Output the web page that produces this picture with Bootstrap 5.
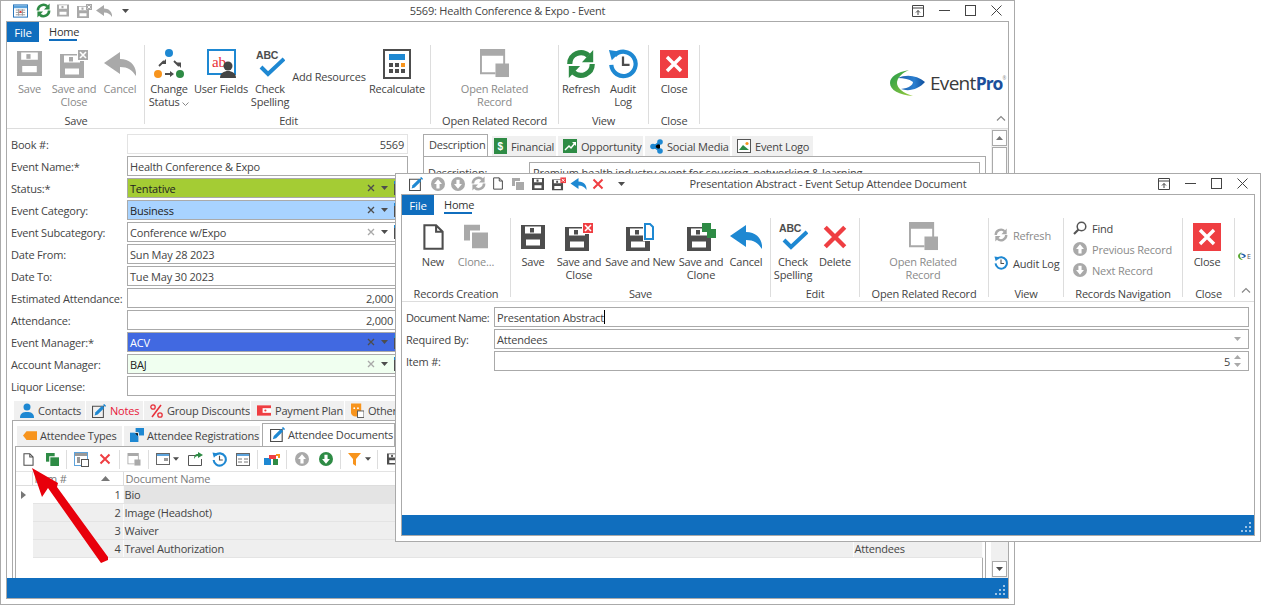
<!DOCTYPE html>
<html lang="en">
<head>
<meta charset="utf-8">
<title>EventPro</title>
<link href="https://cdn.jsdelivr.net/npm/bootstrap@5.3.0/dist/css/bootstrap.min.css" rel="stylesheet">
<style>
html,body{margin:0;height:100%;background:#fff;overflow:hidden}
body{font-family:"Open Sans","Liberation Sans",sans-serif;font-size:11px;line-height:13px;color:#444;letter-spacing:-.2px}
.desk{position:relative;width:1261px;height:605px}
.win{position:absolute;background:#fff;border:1px solid #aaa;display:flex;flex-direction:column}
.win-a{left:0;top:0;width:1015px;height:605px}
.win-b{left:395px;top:173px;width:866px;height:369px}
.ttl{height:19px;flex:none;display:flex;align-items:center;position:relative;padding-left:5px;padding-right:5px}
.ttl-text{position:absolute;left:0;right:0;top:3px;text-align:center;font-size:11px;color:#444}
.qat{display:flex;align-items:center;position:relative;z-index:1}
.ml4{margin-left:4px}.ml5{margin-left:5px}.ml6{margin-left:6px}.ml7{margin-left:7px}.ml8{margin-left:8px}.ml9{margin-left:9px}.ml10{margin-left:10px}.ml14{margin-left:14px}
.winbtns{margin-left:auto;display:flex;position:relative;z-index:1}
.winbtn{width:26px;height:19px;display:flex;align-items:center;justify-content:center;color:#444}
.frame{flex:1;margin:1px 5px 5px;border:1px solid #aaa;display:flex;flex-direction:column;min-height:0;position:relative;overflow:hidden}
.rtabs{height:20px;flex:none;display:flex}
.rfile{width:32px;background:#106ebe;color:#fff;display:flex;align-items:center;justify-content:center;font-size:11.5px}
.rhome{margin-left:10px;width:28px;text-align:center;padding-top:3px;border-bottom:2px solid #106ebe;line-height:13px;color:#333;height:14px;box-sizing:content-box;white-space:nowrap}
.ribbon{height:87px;flex:none;border-bottom:1px solid #ddd;display:flex;position:relative}
.rgrp{margin:3px 0 4px;height:79px;border-right:1px solid #ddd;display:flex;flex-direction:column;flex:none}
.rgrp-top{height:69px;display:flex;flex:none}
.rgrp-lbl{height:13px;margin-bottom:-3px;text-align:center;white-space:nowrap;flex:none;color:#444}
.rbtn{display:flex;flex-direction:column;align-items:center;padding:0;border:0;border-radius:0;font-size:11px;line-height:13px;letter-spacing:inherit;color:#444;flex:none;white-space:nowrap}
.rbtn.off,.sbtn.off{color:#8a8a8a;opacity:1}
.ric{height:37px;display:flex;align-items:center;justify-content:center;flex:none}
.rtop0{padding-top:25px}
.sbtn{display:flex;align-items:center;gap:5px;padding:0;border:0;border-radius:0;font-size:11px;line-height:13px;letter-spacing:inherit;color:#444;white-space:nowrap}
.w38{width:38px}.w40{width:40px}.w42{width:42px}.w43{width:43px}.w44{width:44px}.w46{width:46px}.w48{width:48px}.w50{width:50px}.w56{width:56px}.w60{width:60px}.w74{width:74px}.w80{width:80px}.w126{width:126px}.w127{width:127px}
.g1a{width:138px;padding-left:1px}
.g2a{width:286px;padding-left:2px}
.g3a{width:128px}.g4a{width:90px}.g5a{width:51px}
.g1b{width:109px;padding-left:10px}.g1b .rgrp-lbl{margin-left:-10px}
.g2b{width:260px}.g3b{width:89px}.g4b{width:129px}.g5b{width:75px}.g6b{width:119px}.g7b{width:52px}
.viewcol{padding:10px 0 0 5px;gap:14px;display:flex;flex-direction:column;align-items:flex-start;height:69px}
.navcol{padding:3px 0 0 9px;gap:7px;display:flex;flex-direction:column;align-items:flex-start;height:69px}
.logo-a{margin-left:auto;margin-right:3px;align-self:flex-start;margin-top:27px;overflow:visible}
.logo-b{margin-left:3px;margin-top:37px;align-self:flex-start}
.chev{position:absolute;color:#888;line-height:0}
.win-a .chev{right:2px;top:73px}
.win-b .chev{right:3px;top:72px}
.abody{flex:1;min-height:0;display:flex}
.amain{flex:1;min-width:0;display:flex;flex-direction:column}
.ascroll{width:17px;flex:none;display:flex;flex-direction:column;background:#f0f0f0;padding:1px}
.sb{height:16px;border:1px solid #aaa;display:flex;align-items:center;justify-content:center;background:#fff;flex:none}
.sbthumb{height:200px;border:1px solid #aaa;background:#fff;margin-top:1px;margin-bottom:auto}
.aupper{height:272px;flex:none;display:flex}
.aform{width:415px;flex:none;padding:5px 0 0 4px;display:flex;flex-direction:column;gap:2px}
.frow{display:flex;align-items:center;height:20px}
.flbl{width:116px;flex:none;white-space:nowrap;color:#444}
.fld{border:1px solid #aaa;border-radius:0;height:20px;min-height:0;padding:0 3px 0 2px;font-size:11px;line-height:13px;color:#444;display:flex;align-items:center;background:#fff;white-space:nowrap}
.aform .fld{width:281px;flex:none}
.fld.soft{border-color:#e3e3e3}
.f-tent{background:#a4cc34;color:#222}
.f-bus{background:#a8d3ff;color:#222}
.f-acv{background:#4169e1;color:#fff}
.f-baj{background:#f0fff0;color:#222}
.ficons{margin-left:auto;display:flex;align-items:center;gap:6px}
.num{justify-content:flex-end}
.numpad{padding-right:14px}
.apane{flex:1;min-width:0;padding:5px 5px 0 1px}
.t1.nav-tabs,.t3.nav-tabs{border:0;flex-wrap:nowrap;gap:2px}
.t2.nav-tabs{border:0;flex-wrap:nowrap;gap:1px}
.t1 .nav-link,.t2 .nav-link,.t3 .nav-link{display:flex;align-items:center;gap:4px;padding:0 0 0 6px;margin:0;background:#f0f0f0;border:0;border-radius:0;color:#444;font-size:11px;white-space:nowrap;line-height:13px}
.t1{height:22px;align-items:flex-end}
.t1 .nav-link{height:20px;padding-left:5px;gap:4px}
.t1 .nav-link.active{height:22px;background:#fff;border:1px solid #aaa;border-bottom:0;padding:0 0 2px 5px;color:#444}
.tw65{width:65px}.tw64{width:64px}.tw85{width:85px}.tw81{width:81px}.tw71{width:71px}.tw57{width:57px}.tw105{width:105px}.tw106{width:106px}.tw93{width:93px}.tw60{width:60px}.tw136{width:136px}.tw133{width:133px}
.t1 .fin{margin-left:2px}
.t1 .fin .nav-link{padding-left:2px}
.paneb{height:40px;border:1px solid #aaa;padding:5px 5px 5px 4px;display:flex}
.plbl{width:101px;flex:none;padding-top:4px}
.pval{flex:1;border:1px solid #aaa;padding:3px 3px 0;height:30px;white-space:nowrap;overflow:hidden}
.alower{flex:1;min-height:0;padding:0 0 0 5px;display:flex;flex-direction:column}
.t2{padding-left:2px;height:19px}
.t2 .nav-link{height:19px}
.t2 .nav-link.nr{color:#e8173a}
.lowbox{flex:1;min-height:0;border:1px solid #aaa;border-bottom:0;padding:2px 0 0 2px;margin-right:5px;display:flex;flex-direction:column}
.t3{padding-left:2px;height:23px;align-items:flex-end}
.t3 .nav-link{height:20px;gap:3px;padding-bottom:2px}
.t3 .nav-link.active{height:23px;background:#fff;border:1px solid #aaa;border-bottom:0;padding:0 0 1px 7px;color:#444}
.lowin{flex:1;min-height:0;border:1px solid #aaa;border-bottom:0;display:flex;flex-direction:column;margin-right:2px}
.tbar{height:25px;flex:none;display:flex;align-items:center;border-bottom:1px solid #e3e3e3}
.tcell{width:24px;height:23px;display:flex;align-items:center;justify-content:center;flex:none}
.tcell2{width:32px;justify-content:flex-start;padding-left:5px;gap:3px}
.tcell2b{gap:4px}
.tsep{width:1px;height:19px;background:#ddd;flex:none;margin:0 2px}
.ml1px{margin-left:1px}
table.dgrid{table-layout:fixed;border-collapse:collapse;width:966px;font-size:11px;color:#444}
.dgrid th{font-weight:400;color:#7a7a7a;height:13px;padding:0 1px 0 2px;border-right:1px solid #ddd;border-bottom:1px solid #ddd;background:#fff;line-height:13px}
.dgrid td{height:18px;padding:0 2px 0 1px;background:#efefef;border-right:1px solid #fbfbfb;border-bottom:1px solid #e4e4e4;line-height:13px;white-space:nowrap}
.dgrid td.ind{background:#fff;border-color:#fff}
.dgrid td.cur{background:#fff}
.dgrid td.sel{background:#e4e4e4}
.c0{width:16px}.c1{width:91px}.c2{width:730px}.c3{width:129px}
.sort{float:right;margin:4px 12px 0 0}
.bform{flex:1;padding:5px 5px 0 4px;display:flex;flex-direction:column;gap:2px}
.bform .flbl{width:88px}
.bform .fld{flex:1}
.tight{letter-spacing:-.5px}
.caretbar{display:inline-block;width:1px;height:14px;background:#000}
.stat{height:20px;flex:none;background:#106ebe;position:relative;display:flex;justify-content:flex-end;align-items:flex-end;padding:0 3px 3px 0}
.arrow{position:absolute;left:0;top:0;pointer-events:none}
.gray{color:#a9a9a9}.dk{color:#4d4d4d}.blu{color:#1e88d2}.red{color:#ef3e42}.grn{color:#2e8b45}
svg{display:block;flex:none}
</style>
</head>
<body>
<svg width="0" height="0" class="position-absolute">
<defs>
<linearGradient id="lg" x1="0" y1="0" x2="1" y2="1"><stop offset="0" stop-color="#1f9a4a"/><stop offset="1" stop-color="#9ccc3c"/></linearGradient>
<linearGradient id="lb" x1="0" y1="0" x2="1" y2="0"><stop offset="0" stop-color="#1b5ca8"/><stop offset=".6" stop-color="#2a7fd0"/><stop offset="1" stop-color="#0f4d9a"/></linearGradient>
<symbol id="floppy" viewBox="0 0 24 24"><path fill="currentColor" fill-rule="evenodd" d="M0 0H24V24H0Z M4 1.500V8.500H20V1.500Z M5 14.500V20.500H19V14.500Z"/><rect fill="currentColor" x="9" y="3" width="4" height="4.500"/></symbol>
<symbol id="back" viewBox="0 0 32 24"><path fill="currentColor" d="M0 11 16 0V7C27 7 33 15 32 24 28 18 24 15 16 15V22Z"/></symbol>
<symbol id="xmark" viewBox="0 0 24 24"><path fill="none" stroke="currentColor" stroke-width="4" d="M3 3 21 21M21 3 3 21"/></symbol>
<symbol id="doc" viewBox="0 0 24 30"><path fill="none" stroke="currentColor" stroke-width="2.400" d="M1.500 1.500H15L22.500 9V28.500H1.500Z M15 1.500V9H22.500"/></symbol>
<symbol id="copy2" viewBox="0 0 24 24"><rect fill="currentColor" x="0" y="0" width="16" height="16"/><rect fill="#fff" x="6" y="6" width="18" height="18"/><rect fill="currentColor" x="8" y="8" width="16" height="16"/></symbol>
<symbol id="closeb" viewBox="0 0 28 28"><rect fill="#ef3e42" width="28" height="28"/><path stroke="#fff" stroke-width="3.400" d="M7 7 21 21M21 7 7 21"/></symbol>
<symbol id="refresh" viewBox="0 0 32 32"><path fill="none" stroke="currentColor" stroke-width="5.500" d="M4 16A12 12 0 0 1 24 7M28 16A12 12 0 0 1 8 25"/><path fill="currentColor" d="M29 1V14H17Z M3 31V18H15Z"/></symbol>
<symbol id="audit" viewBox="0 0 32 32"><path fill="none" stroke="#1e88d2" stroke-width="4.500" d="M7 7A13 13 0 1 1 3.500 17"/><path fill="#1e88d2" d="M1 1 13 3 4 12Z"/><path fill="none" stroke="#4d4d4d" stroke-width="2.400" d="M16 8V17H23"/></symbol>
<symbol id="openrel" viewBox="0 0 30 30"><path fill="currentColor" fill-rule="evenodd" d="M0 0H26V16H24V7H2V24H16V26H0Z"/><rect fill="currentColor" x="16" y="15" width="14" height="14"/></symbol>
<symbol id="upc" viewBox="0 0 16 16"><circle cx="8" cy="8" r="8" fill="currentColor"/><path fill="#fff" d="M8 2.500 12.500 8H9.800V13H6.200V8H3.500Z"/></symbol>
<symbol id="dnc" viewBox="0 0 16 16"><circle cx="8" cy="8" r="8" fill="currentColor"/><path fill="#fff" d="M8 13.500 3.500 8H6.200V3H9.800V8H12.500Z"/></symbol>
<symbol id="tri" viewBox="0 0 7 4"><path fill="currentColor" d="M0 0H7L3.500 4Z"/></symbol>
<symbol id="minidoc" viewBox="0 0 10 14"><rect fill="#1e88d2" width="10" height="3"/><rect fill="none" stroke="#4d4d4d" x=".5" y="3.500" width="9" height="10"/></symbol>
<symbol id="docpen" viewBox="0 0 16 16"><path fill="none" stroke="#4d4d4d" stroke-width="1.200" d="M.6 2.600H13V15.400H.6Z"/><path fill="#1e88d2" d="M3 13 4 9.500 11.500 2 14 4.500 6.500 12Z"/><path fill="#1e88d2" d="M12.500 1 14 0 16 2 15 3.500Z"/></symbol>
</defs>
</svg>

<div class="desk">

<!-- Event window -->
<section class="win win-a">
  <div class="ttl">
    <div class="qat">
      <svg width="15" height="14" viewBox="0 0 16 14" class="ml7"><rect x=".5" y=".5" width="15" height="13" fill="#fff" stroke="#1e6fb8"/><rect x="1" y="1" width="14" height="3" fill="#5da3dc"/><path stroke="#999" d="M3 6H13M3 8.500H13M3 11H13M6 5V12M10 5V12"/><rect x="7" y="7" width="2" height="2" fill="#e33"/></svg>
      <svg width="15" height="15" class="ml8 grn"><use href="#refresh" width="15" height="15"/></svg>
      <svg width="12" height="13" class="gray ml6"><use href="#floppy" width="12" height="13"/></svg>
      <svg width="15" height="14" viewBox="0 0 15 14" class="gray ml8"><use href="#floppy" y="2" width="12" height="12"/><rect x="9" y="0" width="6" height="6" fill="#a9a9a9"/><path stroke="#fff" d="M10.500 1.500 13.500 4.500M13.500 1.500 10.500 4.500"/></svg>
      <svg width="16" height="12" class="gray ml4"><use href="#back" width="16" height="12"/></svg>
      <svg width="7" height="4" class="dk ml10"><use href="#tri" width="7" height="4"/></svg>
    </div>
    <div class="ttl-text">5569: Health Conference &amp; Expo - Event</div>
    <div class="winbtns">
      <div class="winbtn"><svg width="12" height="12" viewBox="0 0 12 12"><path fill="none" stroke="currentColor" d="M.5 .5H11.500V11.500H.5ZM.5 3H11.500M6 10V5.500M4 7.500 6 5.500 8 7.500"/></svg></div>
      <div class="winbtn"><svg width="11" height="11" viewBox="0 0 11 11"><path stroke="currentColor" d="M0 5.500H11"/></svg></div>
      <div class="winbtn"><svg width="11" height="11" viewBox="0 0 11 11"><rect x=".5" y=".5" width="10" height="10" fill="none" stroke="currentColor"/></svg></div>
      <div class="winbtn"><svg width="11" height="11" viewBox="0 0 11 11"><path stroke="currentColor" d="M.5 .5 10.500 10.500M10.500 .5 .5 10.500"/></svg></div>
    </div>
  </div>
  <div class="frame">
    <div class="rtabs"><div class="rfile">File</div><div class="rhome">Home</div></div>
    <div class="ribbon">
      <div class="rgrp g1a">
        <div class="rgrp-top">
          <button class="btn rbtn off w43" disabled><span class="ric"><svg width="25" height="25" class="gray"><use href="#floppy" width="25" height="25"/></svg></span>Save</button>
          <button class="btn rbtn off w46" disabled><span class="ric"><svg width="28" height="28" viewBox="0 0 28 28" class="gray"><use href="#floppy" y="4" width="24" height="24"/><rect x="17" y="0" width="11" height="11" fill="#fff"/><rect x="18" y="0" width="10" height="10" fill="#a9a9a9"/><path stroke="#fff" stroke-width="1.600" d="M20 2 26 8M26 2 20 8"/></svg></span>Save and<br>Close</button>
          <button class="btn rbtn off w46" disabled><span class="ric"><svg width="32" height="24" class="gray"><use href="#back" width="32" height="24"/></svg></span>Cancel</button>
        </div>
        <div class="rgrp-lbl">Save</div>
      </div>
      <div class="rgrp g2a">
        <div class="rgrp-top">
          <button class="btn rbtn w44"><span class="ric"><svg width="30" height="30" viewBox="0 0 30 30"><circle cx="15" cy="4" r="4" fill="#1e88d2"/><circle cx="4" cy="25" r="4" fill="#f7941d"/><circle cx="26" cy="25" r="4" fill="#2e8b45"/><path stroke="#4d4d4d" stroke-width="1.800" fill="none" d="M5 17 10 12M20 12 25 17M11 25H18"/><path fill="#4d4d4d" d="M12 10V15H7ZM27 19V13.500H22ZM20 25 16 22V28Z"/></svg></span><span>Change<br>Status <svg width="7" height="4" viewBox="0 0 7 4" class="d-inline align-baseline"><path fill="none" stroke="#888" d="M.5 .5 3.500 3.500 6.500 .5"/></svg></span></button>
          <button class="btn rbtn w60"><span class="ric"><svg width="29" height="29" viewBox="0 0 29 29"><rect x="1" y="1" width="27" height="24" fill="#fff" stroke="#1e88d2" stroke-width="2"/><text x="5" y="18" font-family="Liberation Serif,serif" font-size="15" fill="#e8303a">ab</text><circle cx="21" cy="17" r="4.500" fill="#444"/><path fill="#444" d="M13 29C13 24 17 22 21 22S29 24 29 29Z"/></svg></span>User Fields</button>
          <button class="btn rbtn w38"><span class="ric"><svg width="30" height="30" viewBox="0 0 30 30"><text x="1" y="10" font-family="Liberation Sans,sans-serif" font-weight="700" font-size="10.500" fill="#4d4d4d">ABC</text><path fill="none" stroke="#1e88d2" stroke-width="4" d="M6 18 13 25 29 10"/></svg></span>Check<br>Spelling</button>
          <button class="btn rbtn w80 rtop0">Add Resources</button>
          <button class="btn rbtn w56"><span class="ric"><svg width="28" height="30" viewBox="0 0 28 30"><rect x="1" y="1" width="26" height="28" fill="#fff" stroke="#4d4d4d" stroke-width="2"/><rect x="6" y="5" width="16" height="6" fill="#1e88d2"/><path fill="#4d4d4d" d="M6 14H10V18H6ZM12 14H16V18H12ZM6 20H10V24H6ZM12 20H16V24H12ZM18 20H22V24H18Z"/><rect x="18" y="14" width="4" height="4" fill="#f7941d"/></svg></span>Recalculate</button>
        </div>
        <div class="rgrp-lbl">Edit</div>
      </div>
      <div class="rgrp g3a">
        <div class="rgrp-top">
          <button class="btn rbtn off w127" disabled><span class="ric"><svg width="29" height="29" class="gray"><use href="#openrel" width="29" height="29"/></svg></span>Open Related<br>Record</button>
        </div>
        <div class="rgrp-lbl">Open Related Record</div>
      </div>
      <div class="rgrp g4a">
        <div class="rgrp-top">
          <button class="btn rbtn w44"><span class="ric"><svg width="30" height="30" class="grn"><use href="#refresh" width="30" height="30"/></svg></span>Refresh</button>
          <button class="btn rbtn w40"><span class="ric"><svg width="30" height="30"><use href="#audit" width="30" height="30"/></svg></span>Audit<br>Log</button>
        </div>
        <div class="rgrp-lbl">View</div>
      </div>
      <div class="rgrp g5a">
        <div class="rgrp-top">
          <button class="btn rbtn w50"><span class="ric"><svg width="28" height="28"><use href="#closeb" width="28" height="28"/></svg></span>Close</button>
        </div>
        <div class="rgrp-lbl">Close</div>
      </div>
      <svg class="logo-a" width="116" height="28" viewBox="0 0 116 28"><path fill="url(#lg)" d="M20 1C8 3 1 8 1 14 1 21 10 26 24 27 14 24 8 19 8 14 8 9 13 4 20 1Z"/><path fill="url(#lb)" d="M9 9C17 5 28 6 36 13 30 20 20 23 12 20 20 19 24 16 24 13 20 10 15 9 9 9Z"/><text x="41" y="21" font-family="Open Sans,sans-serif" font-size="19" letter-spacing="-.7" fill="#3a3a3a">Event<tspan font-size="17.500" font-weight="700" letter-spacing="-1" fill="#1b4f9c">Pro</tspan><tspan font-size="4.500" dy="-10" letter-spacing="0" fill="#888">®</tspan></text></svg>
      <div class="chev"><svg width="10" height="6" viewBox="0 0 10 6"><path fill="none" stroke="currentColor" stroke-width="1.200" d="M1 5.500 5 1.500 9 5.500"/></svg></div>
    </div>
    <div class="abody">
      <div class="amain">
        <div class="aupper">
          <div class="aform">
            <div class="frow"><div class="flbl">Book #:</div><div class="form-control fld soft num">5569</div></div>
            <div class="frow"><div class="flbl">Event Name:*</div><div class="form-control fld">Health Conference &amp; Expo</div></div>
            <div class="frow"><div class="flbl">Status:*</div><div class="form-control fld f-tent">Tentative<span class="ficons"><svg width="8" height="8" class="dk"><use href="#xmark" width="8" height="8"/></svg><svg width="7" height="4" class="dk"><use href="#tri" width="7" height="4"/></svg><svg width="10" height="14"><use href="#minidoc" width="10" height="14"/></svg></span></div></div>
            <div class="frow"><div class="flbl">Event Category:</div><div class="form-control fld f-bus">Business<span class="ficons"><svg width="8" height="8" class="dk"><use href="#xmark" width="8" height="8"/></svg><svg width="7" height="4" class="dk"><use href="#tri" width="7" height="4"/></svg><svg width="10" height="14"><use href="#minidoc" width="10" height="14"/></svg></span></div></div>
            <div class="frow"><div class="flbl">Event Subcategory:</div><div class="form-control fld">Conference w/Expo<span class="ficons"><svg width="8" height="8" class="gray"><use href="#xmark" width="8" height="8"/></svg><svg width="7" height="4" class="dk"><use href="#tri" width="7" height="4"/></svg><svg width="10" height="14"><use href="#minidoc" width="10" height="14"/></svg></span></div></div>
            <div class="frow"><div class="flbl">Date From:</div><div class="form-control fld">Sun May 28 2023</div></div>
            <div class="frow"><div class="flbl">Date To:</div><div class="form-control fld">Tue May 30 2023</div></div>
            <div class="frow"><div class="flbl">Estimated Attendance:</div><div class="form-control fld num numpad">2,000</div></div>
            <div class="frow"><div class="flbl">Attendance:</div><div class="form-control fld num numpad">2,000</div></div>
            <div class="frow"><div class="flbl">Event Manager:*</div><div class="form-control fld f-acv">ACV<span class="ficons"><svg width="8" height="8" class="dk"><use href="#xmark" width="8" height="8"/></svg><svg width="7" height="4" class="dk"><use href="#tri" width="7" height="4"/></svg><svg width="10" height="14"><use href="#minidoc" width="10" height="14"/></svg></span></div></div>
            <div class="frow"><div class="flbl">Account Manager:</div><div class="form-control fld f-baj">BAJ<span class="ficons"><svg width="8" height="8" class="gray"><use href="#xmark" width="8" height="8"/></svg><svg width="7" height="4" class="dk"><use href="#tri" width="7" height="4"/></svg><svg width="10" height="14"><use href="#minidoc" width="10" height="14"/></svg></span></div></div>
            <div class="frow"><div class="flbl">Liquor License:</div><div class="form-control fld"></div></div>
          </div>
          <div class="apane">
            <ul class="nav nav-tabs t1">
              <li class="nav-item"><a class="nav-link active tw65">Description</a></li>
              <li class="nav-item fin"><a class="nav-link tw64"><svg width="13" height="16" viewBox="0 0 13 16"><rect width="13" height="16" fill="#2e8b45"/><text x="3.500" y="12" font-family="Liberation Sans,sans-serif" font-size="10" font-weight="700" fill="#fff">$</text></svg>Financial</a></li>
              <li class="nav-item"><a class="nav-link tw85"><svg width="14" height="14" viewBox="0 0 14 14"><rect width="14" height="14" fill="#2e8b45"/><path fill="none" stroke="#fff" stroke-width="1.500" d="M2 11 6 7 8 9 12 4"/><path fill="#fff" d="M9 3H13V7Z"/></svg>Opportunity</a></li>
              <li class="nav-item"><a class="nav-link tw85"><svg width="13" height="15" viewBox="0 0 13 15"><path stroke="#1e88d2" stroke-width="1.500" d="M10 3 3 7.500 10 12"/><circle cx="10" cy="3" r="2.800" fill="#1e88d2"/><circle cx="3" cy="7.500" r="2.800" fill="#1e88d2"/><circle cx="10" cy="12" r="2.800" fill="#1e88d2"/></svg>Social Media</a></li>
              <li class="nav-item"><a class="nav-link tw81"><svg width="14" height="14" viewBox="0 0 14 14"><rect x=".5" y=".5" width="13" height="13" fill="#fff" stroke="#555"/><path fill="#2e8b45" d="M2 11 6 6 12 11Z"/><circle cx="10" cy="4.500" r="1.600" fill="#f7941d"/></svg>Event Logo</a></li>
            </ul>
            <div class="paneb"><div class="plbl">Description:</div><div class="pval">Premium health industry event for sourcing, networking &amp; learning</div></div>
          </div>
        </div>
        <div class="alower">
          <ul class="nav nav-tabs t2">
            <li class="nav-item"><a class="nav-link tw71"><svg width="14" height="15" viewBox="0 0 14 15"><circle cx="7" cy="4" r="3.500" fill="#1e88d2"/><path fill="#1e88d2" d="M0 15C0 10 3 9 7 9S14 10 14 15Z"/></svg>Contacts</a></li>
            <li class="nav-item"><a class="nav-link nr tw57"><svg width="14" height="14"><use href="#docpen" width="14" height="14"/></svg>Notes</a></li>
            <li class="nav-item"><a class="nav-link tw106"><svg width="13" height="14" viewBox="0 0 13 14"><path stroke="#e8303a" stroke-width="1.600" d="M11 1 2 13"/><circle cx="3" cy="3" r="2.200" fill="none" stroke="#e8303a" stroke-width="1.300"/><circle cx="10" cy="11" r="2.200" fill="none" stroke="#e8303a" stroke-width="1.300"/></svg>Group Discounts</a></li>
            <li class="nav-item"><a class="nav-link tw93"><svg width="14" height="13" viewBox="0 0 15 13"><rect y="1" width="15" height="11" fill="#ef3e42"/><rect x="6" y="4" width="9" height="5" fill="#fff"/><circle cx="9" cy="6.500" r="1.200" fill="#ef3e42"/></svg>Payment Plan</a></li>
            <li class="nav-item"><a class="nav-link tw60"><svg width="13" height="15" viewBox="0 0 14 15"><path fill="#f7941d" d="M0 0H11V10C11 13 8 14 5 14 2 14 0 12 0 10Z"/><circle cx="3.500" cy="5" r="1" fill="#fff"/><circle cx="7.500" cy="5" r="1" fill="#fff"/><rect x="7" y="8" width="7" height="7" fill="#fff" stroke="#555"/></svg>Other</a></li>
          </ul>
          <div class="lowbox">
            <ul class="nav nav-tabs t3">
              <li class="nav-item"><a class="nav-link tw105"><svg width="14" height="9" viewBox="0 0 16 10"><path fill="#f7941d" d="M0 5 4 0H16V10H4Z"/></svg>Attendee Types</a></li>
              <li class="nav-item"><a class="nav-link tw136"><svg width="14" height="14" viewBox="0 0 15 15"><rect y="5" width="9" height="10" fill="#1e88d2"/><rect x="6" y="0" width="9" height="8" fill="#1e88d2"/><path stroke="#fff" d="M5 5H9V9"/></svg>Attendee Registrations</a></li>
              <li class="nav-item"><a class="nav-link active tw133"><svg width="15" height="15"><use href="#docpen" width="15" height="15"/></svg>Attendee Documents</a></li>
            </ul>
            <div class="lowin">
              <div class="tbar">
                <div class="tcell"><svg width="11" height="13" class="dk"><use href="#doc" width="11" height="13"/></svg></div>
                <div class="tcell"><svg width="13" height="13" class="grn"><use href="#copy2" width="13" height="13"/></svg></div>
                <div class="tsep"></div>
                <div class="tcell"><svg width="15" height="15" viewBox="0 0 15 15"><rect x=".5" y=".5" width="13" height="13" fill="#fff" stroke="#5da3dc"/><rect x="1" y="1" width="12" height="3" fill="#999"/><rect x="3" y="5" width="3" height="6" fill="#999"/><rect x="7.500" y="7.500" width="7" height="7" fill="#fff" stroke="#555"/></svg></div>
                <div class="tcell"><svg width="12" height="12" class="red"><use href="#xmark" width="12" height="12"/></svg></div>
                <div class="tsep"></div>
                <div class="tcell"><svg width="14" height="13" class="gray"><use href="#openrel" width="14" height="13"/></svg></div>
                <div class="tsep"></div>
                <div class="tcell tcell2"><svg width="14" height="12" viewBox="0 0 14 12"><rect x=".5" y=".5" width="13" height="11" fill="#fff" stroke="#666"/><rect x="1" y="1" width="12" height="2" fill="#5da3dc"/><rect x="8" y="5" width="4" height="3" fill="#999"/></svg><svg width="6" height="4" class="dk"><use href="#tri" width="6" height="4"/></svg></div>
                <div class="tcell"><svg width="15" height="14" viewBox="0 0 15 14"><path fill="none" stroke="#555" d="M.5 3.500H9M.5 3.500V13.500H13.500V7"/><path fill="#2e8b45" d="M15 3 10 0V2C7 2 6 4 6 7 7 5 8 4 10 4V6Z"/></svg></div>
                <div class="tcell"><svg width="15" height="15"><use href="#audit" width="15" height="15"/></svg></div>
                <div class="tcell"><svg width="14" height="13" viewBox="0 0 14 13"><rect x=".5" y=".5" width="13" height="12" fill="#fff" stroke="#666"/><rect x="1" y="1" width="12" height="2" fill="#5da3dc"/><path stroke="#777" d="M2 6H6M8 6H12M2 9H6M8 9H12"/></svg></div>
                <div class="tsep"></div>
                <div class="tcell"><svg width="16" height="11" viewBox="0 0 16 11"><rect y="4" width="7" height="7" fill="#1e88d2"/><rect x="5" y="1" width="7" height="4" fill="#ef3e42"/><rect x="9" y="5" width="5" height="6" fill="#2e8b45"/><path stroke="#f7941d" stroke-width="2" fill="none" d="M12 1H15V4"/></svg></div>
                <div class="tsep"></div>
                <div class="tcell ml1px"><svg width="14" height="14" class="gray"><use href="#upc" width="14" height="14"/></svg></div>
                <div class="tcell"><svg width="14" height="14" class="grn"><use href="#dnc" width="14" height="14"/></svg></div>
                <div class="tsep"></div>
                <div class="tcell tcell2 tcell2b"><svg width="13" height="13" viewBox="0 0 13 13"><path fill="#f7941d" d="M0 0H13L8 6V13L5 11V6Z"/></svg><svg width="6" height="4" class="dk"><use href="#tri" width="6" height="4"/></svg></div>
                <div class="tsep"></div>
                <div class="tcell"><svg width="11" height="12" class="dk"><use href="#floppy" width="11" height="12"/></svg></div>
              </div>
              <table class="dgrid">
                <thead><tr><th class="c0"></th><th class="c1">Item #<svg class="sort" width="9" height="5" viewBox="0 0 9 5"><path fill="#777" d="M4.500 0 9 5H0Z"/></svg></th><th class="c2">Document Name</th><th class="c3">Required By</th></tr></thead>
                <tbody>
                  <tr><td class="ind"><svg width="5" height="8" viewBox="0 0 5 8" class="ms-1"><path fill="#777" d="M0 0 5 4 0 8Z"/></svg></td><td class="cur text-end">1</td><td class="sel">Bio</td><td class="sel">Attendees</td></tr>
                  <tr><td class="ind"></td><td class="text-end">2</td><td>Image (Headshot)</td><td>Attendees</td></tr>
                  <tr><td class="ind"></td><td class="text-end">3</td><td>Waiver</td><td>Attendees</td></tr>
                  <tr><td class="ind"></td><td class="text-end">4</td><td>Travel Authorization</td><td>Attendees</td></tr>
                </tbody>
              </table>
            </div>
          </div>
        </div>
      </div>
      <div class="ascroll">
        <div class="sb"><svg width="7" height="4" viewBox="0 0 7 4"><path fill="#777" d="M3.500 0 7 4H0Z"/></svg></div>
        <div class="sbthumb"></div>
        <div class="sb"><svg width="7" height="4" class="dk"><use href="#tri" width="7" height="4"/></svg></div>
      </div>
    </div>
    <div class="stat"><svg width="10" height="10" viewBox="0 0 10 10"><path fill="#9cc3e6" d="M8 0h2v2H8zM4 4h2v2H4zM8 4h2v2H8zM0 8h2v2H0zM4 8h2v2H4zM8 8h2v2H8z"/></svg></div>
  </div>
</section>

<!-- Red arrow annotation -->
<svg class="arrow" width="130" height="580" viewBox="0 0 130 580"><path fill="#e8000b" d="M32 468 58 483 57 487 108 557 108 560 101 563 48 488 42 497Z"/></svg>

<!-- Document window -->
<section class="win win-b">
  <div class="ttl">
    <div class="qat">
      <svg width="14" height="14" class="ml8"><use href="#docpen" width="14" height="14"/></svg>
      <svg width="14" height="14" class="gray ml8"><use href="#upc" width="14" height="14"/></svg>
      <svg width="14" height="14" class="gray ml6"><use href="#dnc" width="14" height="14"/></svg>
      <svg width="15" height="15" class="gray ml6"><use href="#refresh" width="15" height="15"/></svg>
      <svg width="10" height="13" class="dk ml7"><use href="#doc" width="10" height="13"/></svg>
      <svg width="12" height="12" class="gray ml9"><use href="#copy2" width="12" height="12"/></svg>
      <svg width="12" height="12" class="dk ml8"><use href="#floppy" width="12" height="12"/></svg>
      <svg width="14" height="14" viewBox="0 0 15 14" class="dk ml8"><use href="#floppy" y="2" width="12" height="12"/><rect x="9" y="0" width="6" height="6" fill="#ef3e42"/><path stroke="#fff" d="M10.500 1.500 13.500 4.500M13.500 1.500 10.500 4.500"/></svg>
      <svg width="17" height="12" class="blu ml4"><use href="#back" width="17" height="12"/></svg>
      <svg width="12" height="12" class="red ml5"><use href="#xmark" width="12" height="12"/></svg>
      <svg width="7" height="4" class="dk ml14"><use href="#tri" width="7" height="4"/></svg>
    </div>
    <div class="ttl-text">Presentation Abstract - Event Setup Attendee Document</div>
    <div class="winbtns">
      <div class="winbtn"><svg width="12" height="12" viewBox="0 0 12 12"><path fill="none" stroke="currentColor" d="M.5 .5H11.500V11.500H.5ZM.5 3H11.500M6 10V5.500M4 7.500 6 5.500 8 7.500"/></svg></div>
      <div class="winbtn"><svg width="11" height="11" viewBox="0 0 11 11"><path stroke="currentColor" d="M0 5.500H11"/></svg></div>
      <div class="winbtn"><svg width="11" height="11" viewBox="0 0 11 11"><rect x=".5" y=".5" width="10" height="10" fill="none" stroke="currentColor"/></svg></div>
      <div class="winbtn"><svg width="11" height="11" viewBox="0 0 11 11"><path stroke="currentColor" d="M.5 .5 10.500 10.500M10.500 .5 .5 10.500"/></svg></div>
    </div>
  </div>
  <div class="frame">
    <div class="rtabs"><div class="rfile">File</div><div class="rhome">Home</div></div>
    <div class="ribbon">
      <div class="rgrp g1b">
        <div class="rgrp-top">
          <button class="btn rbtn w42"><span class="ric"><svg width="21" height="26" class="dk"><use href="#doc" width="21" height="26"/></svg></span>New</button>
          <button class="btn rbtn off w44" disabled><span class="ric"><svg width="24" height="27" viewBox="0 0 24 24" class="gray"><use href="#copy2" width="24" height="24"/></svg></span>Clone...</button>
        </div>
        <div class="rgrp-lbl">Records Creation</div>
      </div>
      <div class="rgrp g2b">
        <div class="rgrp-top">
          <button class="btn rbtn w44"><span class="ric"><svg width="24" height="24" class="dk"><use href="#floppy" width="24" height="24"/></svg></span>Save</button>
          <button class="btn rbtn w48"><span class="ric"><svg width="28" height="28" viewBox="0 0 28 28" class="dk"><use href="#floppy" y="4" width="24" height="24"/><rect x="17" y="0" width="11" height="11" fill="#fff"/><rect x="18" y="0" width="10" height="10" fill="#ef3e42"/><path stroke="#fff" stroke-width="1.600" d="M20 2 26 8M26 2 20 8"/></svg></span>Save and<br>Close</button>
          <button class="btn rbtn w74"><span class="ric"><svg width="28" height="28" viewBox="0 0 28 28" class="dk"><use href="#floppy" y="4" width="24" height="24"/><path fill="#fff" stroke="#fff" stroke-width="4" d="M19 1H24L27 4V16H19Z"/><path fill="#fff" stroke="#1e88d2" stroke-width="2" d="M19 1H24L27 4V16H19Z"/></svg></span>Save and New</button>
          <button class="btn rbtn w48"><span class="ric"><svg width="29" height="28" viewBox="0 0 29 28" class="dk"><use href="#floppy" y="4" width="24" height="24"/><rect x="15" y="0" width="9" height="9" fill="#2e8b45"/><rect x="20" y="6" width="9" height="9" fill="#2e8b45"/></svg></span>Save and<br>Clone</button>
          <button class="btn rbtn w42"><span class="ric"><svg width="32" height="24" class="blu"><use href="#back" width="32" height="24"/></svg></span>Cancel</button>
        </div>
        <div class="rgrp-lbl">Save</div>
      </div>
      <div class="rgrp g3b">
        <div class="rgrp-top">
          <button class="btn rbtn w44"><span class="ric"><svg width="30" height="30" viewBox="0 0 30 30"><text x="1" y="10" font-family="Liberation Sans,sans-serif" font-weight="700" font-size="10.500" fill="#4d4d4d">ABC</text><path fill="none" stroke="#1e88d2" stroke-width="4" d="M6 18 13 25 29 10"/></svg></span>Check<br>Spelling</button>
          <button class="btn rbtn w40"><span class="ric"><svg width="26" height="26" class="red"><use href="#xmark" width="26" height="26"/></svg></span>Delete</button>
        </div>
        <div class="rgrp-lbl">Edit</div>
      </div>
      <div class="rgrp g4b">
        <div class="rgrp-top">
          <button class="btn rbtn off w126" disabled><span class="ric"><svg width="29" height="29" class="gray"><use href="#openrel" width="29" height="29"/></svg></span>Open Related<br>Record</button>
        </div>
        <div class="rgrp-lbl">Open Related Record</div>
      </div>
      <div class="rgrp g5b">
        <div class="rgrp-top viewcol">
          <button class="btn sbtn off" disabled><svg width="14" height="14" class="gray"><use href="#refresh" width="14" height="14"/></svg>Refresh</button>
          <button class="btn sbtn"><svg width="14" height="14"><use href="#audit" width="14" height="14"/></svg>Audit Log</button>
        </div>
        <div class="rgrp-lbl">View</div>
      </div>
      <div class="rgrp g6b">
        <div class="rgrp-top navcol">
          <button class="btn sbtn"><svg width="14" height="14" viewBox="0 0 14 14"><circle cx="8.500" cy="5.500" r="4.300" fill="none" stroke="#555" stroke-width="1.500"/><path stroke="#555" stroke-width="2.200" d="M5.500 8.500 1 13"/></svg>Find</button>
          <button class="btn sbtn off" disabled><svg width="14" height="14" class="gray"><use href="#upc" width="14" height="14"/></svg>Previous Record</button>
          <button class="btn sbtn off" disabled><svg width="14" height="14" class="gray"><use href="#dnc" width="14" height="14"/></svg>Next Record</button>
        </div>
        <div class="rgrp-lbl">Records Navigation</div>
      </div>
      <div class="rgrp g7b">
        <div class="rgrp-top">
          <button class="btn rbtn w48"><span class="ric"><svg width="28" height="28"><use href="#closeb" width="28" height="28"/></svg></span>Close</button>
        </div>
        <div class="rgrp-lbl">Close</div>
      </div>
      <svg class="logo-b" width="13" height="8" viewBox="0 0 13 8"><path fill="#5aa832" d="M4 0C1 1 0 3 0 4c0 2 2 4 5 4C3 7 2 5 2 4 2 2 3 1 4 0Z"/><path fill="#1b5ca8" d="M2 2C4 1 7 2 8 4 7 6 4 6 3 6 5 5 6 4.500 6 4 5 3 3 2 2 2Z"/><text x="9" y="6.500" font-family="Open Sans,sans-serif" font-size="7" fill="#555">E</text></svg>
      <div class="chev"><svg width="10" height="6" viewBox="0 0 10 6"><path fill="none" stroke="currentColor" stroke-width="1.200" d="M1 5.500 5 1.500 9 5.500"/></svg></div>
    </div>
    <div class="bform">
      <div class="frow"><div class="flbl tight">Document Name:</div><div class="form-control fld">Presentation Abstract<span class="caretbar"></span></div></div>
      <div class="frow"><div class="flbl">Required By:</div><div class="form-control fld">Attendees<span class="ficons pe-1"><svg width="7" height="4" class="gray"><use href="#tri" width="7" height="4"/></svg></span></div></div>
      <div class="frow"><div class="flbl">Item #:</div><div class="form-control fld num">5<span class="d-flex flex-column gap-1 ms-1 pe-1"><svg width="7" height="4" viewBox="0 0 7 4"><path fill="#a9a9a9" d="M3.500 0 7 4H0Z"/></svg><svg width="7" height="4" class="gray"><use href="#tri" width="7" height="4"/></svg></span></div></div>
    </div>
    <div class="stat"><svg width="10" height="10" viewBox="0 0 10 10"><path fill="#9cc3e6" d="M8 0h2v2H8zM4 4h2v2H4zM8 4h2v2H8zM0 8h2v2H0zM4 8h2v2H4zM8 8h2v2H8z"/></svg></div>
  </div>
</section>

</div>
<script src="https://cdn.jsdelivr.net/npm/bootstrap@5.3.0/dist/js/bootstrap.bundle.min.js"></script>
</body>
</html>
